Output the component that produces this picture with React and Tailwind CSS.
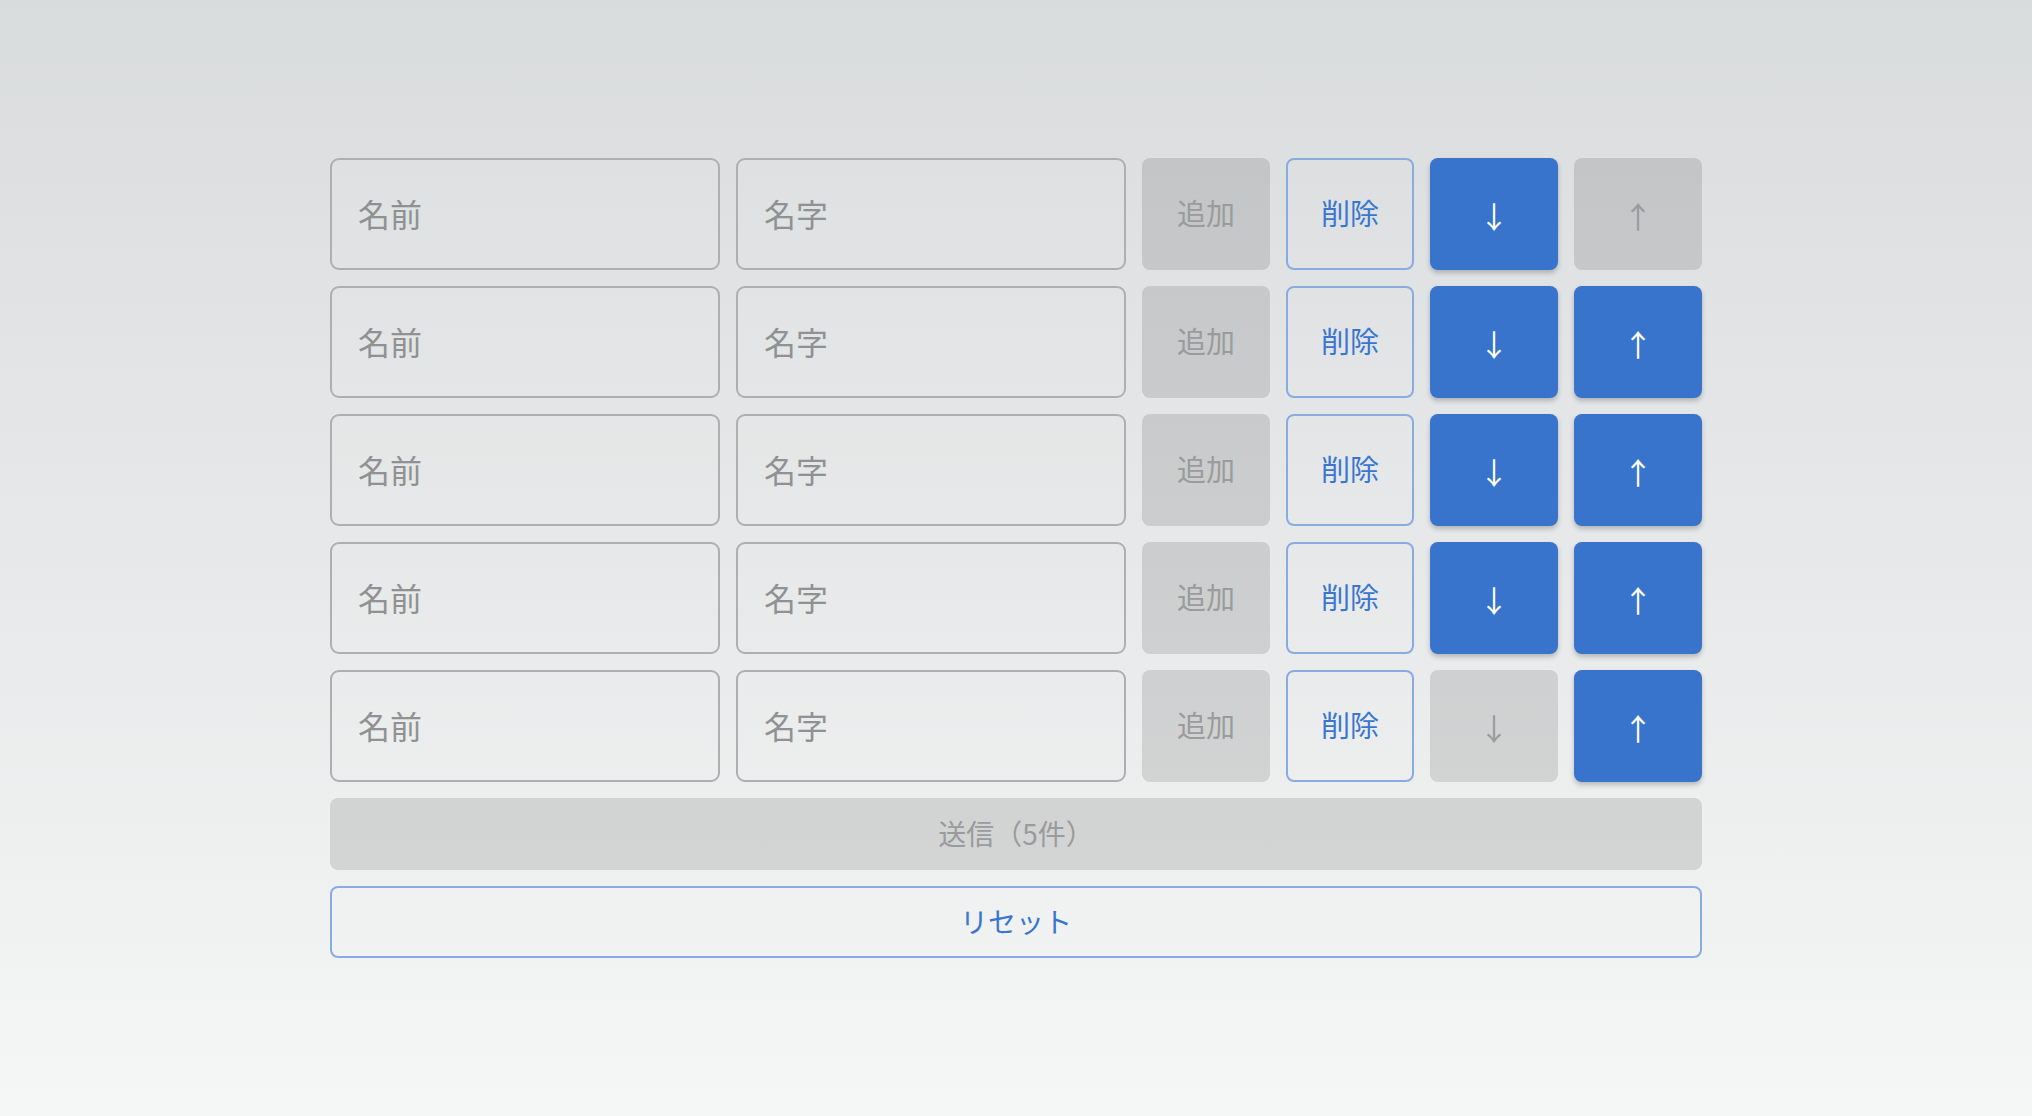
import React from "react";

function Row({ first, last }) {
  return (
    <div className="flex h-[112px] gap-4">
      <input
        placeholder="名前"
        className="min-w-0 flex-1 rounded-[9px] border-2 border-[#adafb0] bg-white/[0.04] px-[26px] pb-[3px] text-[32px] text-[#555] outline-none placeholder:text-[#8f9192]"
      />
      <input
        placeholder="名字"
        className="min-w-0 flex-1 rounded-[9px] border-2 border-[#adafb0] bg-white/[0.04] px-[26px] pb-[3px] text-[32px] text-[#555] outline-none placeholder:text-[#8f9192]"
      />
      <button
        disabled
        className="w-[128px] rounded-[8px] bg-black/[0.115] pb-[3px] text-[29px] text-[#999b9c]"
      >
        追加
      </button>
      <button className="w-[128px] rounded-[8px] border-2 border-[#8aabe0] pb-[3px] text-[29px] text-[#3a76d0]">
        削除
      </button>
      {last ? (
        <button
          disabled
          className="w-[128px] rounded-[8px] bg-black/[0.115] pt-[2px] text-[30px] text-[#999b9c]"
        >
          ↓
        </button>
      ) : (
        <button className="w-[128px] rounded-[8px] bg-[#3873cc] pt-[2px] text-[30px] text-white shadow-[0_3px_5px_rgba(0,0,0,0.22)]">
          ↓
        </button>
      )}
      {first ? (
        <button
          disabled
          className="w-[128px] rounded-[8px] bg-black/[0.115] pt-[2px] text-[30px] text-[#999b9c]"
        >
          ↑
        </button>
      ) : (
        <button className="w-[128px] rounded-[8px] bg-[#3873cc] pt-[2px] text-[30px] text-white shadow-[0_3px_5px_rgba(0,0,0,0.22)]">
          ↑
        </button>
      )}
    </div>
  );
}

export default function App() {
  const rows = [0, 1, 2, 3, 4];
  return (
    <div className="flex min-h-screen items-center justify-center bg-linear-to-b from-[#d9dcdd] to-[#f5f6f6] font-['Noto_Sans_CJK_JP','Noto_Sans',sans-serif]">
      <div className="flex w-[1372px] flex-col gap-4">
        {rows.map((i) => (
          <Row key={i} first={i === 0} last={i === rows.length - 1} />
        ))}
        <button
          disabled
          className="h-[72px] w-full rounded-[8px] bg-black/[0.115] pb-[2px] text-[28px] text-[#999b9c]"
        >
          送信（5件）
        </button>
        <button className="h-[72px] w-full rounded-[8px] border-2 border-[#8aabe0] pb-[2px] text-[28px] text-[#3a76d0]">
          リセット
        </button>
      </div>
    </div>
  );
}
